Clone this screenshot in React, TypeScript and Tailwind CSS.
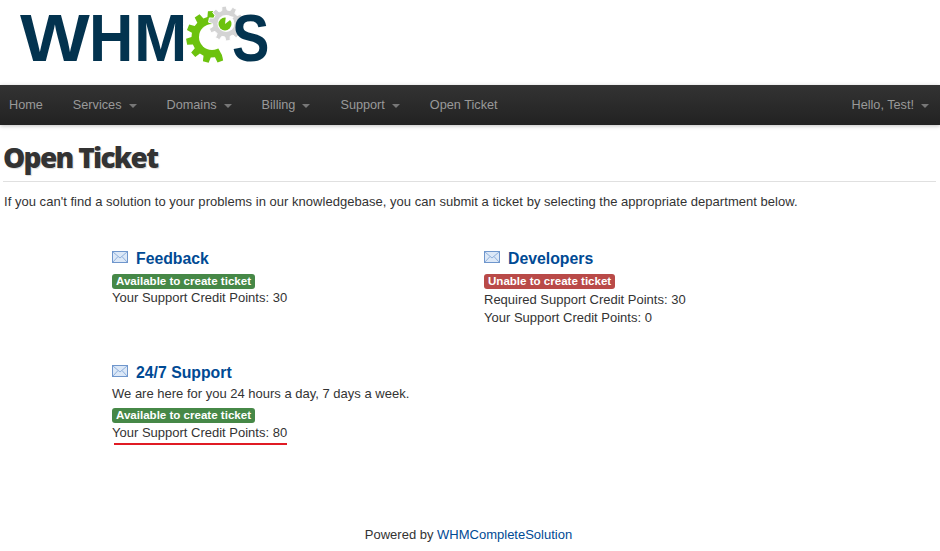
import React from 'react';

const gearPath = (cx: number, cy: number, outer: number, root: number, teeth: number, rot = 0) => {
  const pts: string[] = [];
  const step = (Math.PI * 2) / teeth;
  for (let i = 0; i < teeth; i++) {
    const a = rot + i * step;
    const corners: [number, number][] = [
      [root, a - step * 0.32],
      [outer, a - step * 0.2],
      [outer, a + step * 0.2],
      [root, a + step * 0.32],
    ];
    corners.forEach(([r, t]) => {
      pts.push(`${(cx + r * Math.cos(t)).toFixed(2)} ${(cy + r * Math.sin(t)).toFixed(2)}`);
    });
  }
  return `M${pts.join('L')}Z`;
};

const Logo = () => (
  <div className="flex items-start h-[85px] pl-[20px] text-[#03334f] text-[66px] leading-[76px] font-bold font-['Liberation_Sans',sans-serif]">
    <span className="inline-block origin-left scale-x-[1.12] mr-[7px]">W</span>
    <span className="inline-block origin-left scale-x-[0.93] -mr-[3px]">H</span>
    <span className="inline-block origin-left scale-x-[0.97]">M</span>
    <svg width="56" height="60" viewBox="0 0 56 60" className="shrink-0 mt-[6px] -ml-[3px]">
      <path d={gearPath(26, 31, 26, 20.5, 11, 0.1)} fill="#6cc20e" />
      <circle cx="26" cy="31" r="13" fill="#fff" />
      <path d="M26 31 L56 22 L56 60 L42 60 Z" fill="#fff" />
      <path d={gearPath(40, 17.5, 17.5, 13.5, 10, 0.2)} fill="#d4d4d4" stroke="#fff" strokeWidth="1" />
      <circle cx="40" cy="17.5" r="8.5" fill="#fff" />
      <circle cx="39" cy="18" r="6.5" fill="#6cc20e" />
      <path d="M39 18 L48 11 L40 9 Z" fill="#fff" />
    </svg>
    <span className="inline-block origin-left scale-x-[0.85] -ml-[10px]">S</span>
  </div>
);

const NavItem = ({ label, caret, className = '' }: { label: string; caret?: boolean; className?: string }) => (
  <a className={`flex items-center h-full text-[12.7px] text-[#999999] ${className}`}>
    {label}
    {caret && <span className="ml-[7px] mt-[1px] w-0 h-0 border-x-[4px] border-x-transparent border-t-[4px] border-t-[#777777]" />}
  </a>
);

const Badge = ({ ok }: { ok: boolean }) => (
  <div className="h-[16px] flex items-center">
    <span className={`inline-flex items-center h-[15px] pb-[1px] px-[4px] rounded-[3px] text-white text-[11.55px] font-bold ${ok ? 'bg-[#468847]' : 'bg-[#b94a48]'}`}>
      {ok ? 'Available to create ticket' : 'Unable to create ticket'}
    </span>
  </div>
);

const MailIcon = () => (
  <svg width="16" height="12" viewBox="0 0 16 12" className="shrink-0">
    <rect x="0.5" y="0.5" width="15" height="11" fill="#dce8f7" stroke="#6f96cc" />
    <path d="M1 1 L8 7 L15 1 M1 11 L6 5.5 M15 11 L10 5.5" fill="none" stroke="#8fb0dc" />
  </svg>
);

const Dept = ({ title, children }: { title: string; children: React.ReactNode }) => (
  <div>
    <div className="flex items-center h-[20px] gap-[8px]">
      <div className="-mt-[4px]"><MailIcon /></div>
      <a className="text-[15.8px] font-bold text-[#004a94] leading-[20px]">{title}</a>
    </div>
    {children}
  </div>
);

export default function App() {
  return (
    <div className="w-[940px] h-[551px] overflow-hidden bg-white text-[#333333] text-[13px] leading-[20px] font-['Liberation_Sans',Arial,sans-serif]">
      <Logo />
      <nav className="flex items-center justify-between h-[40px] pl-[9px] pr-[11px] bg-gradient-to-b from-[#333333] to-[#222222] shadow-[0_1px_4px_rgba(0,0,0,0.25)]">
        <div className="flex items-center h-full gap-[30px]">
          <NavItem label="Home" />
          <NavItem label="Services" caret />
          <NavItem label="Domains" caret />
          <NavItem label="Billing" caret />
          <NavItem label="Support" caret />
          <NavItem label="Open Ticket" />
        </div>
        <NavItem label="Hello, Test!" caret />
      </nav>

      <main className="px-[4px]">
        <h1 className="h-[57px] pt-[15px] border-b border-[#e0e0e0] text-[28px] leading-[34px] font-extrabold tracking-[-1.7px] -ml-[1px] font-['Open_Sans',sans-serif] [text-shadow:1px_1px_1px_rgba(0,0,0,0.15)]">
          Open Ticket
        </h1>
        <p className="mt-[10px] tracking-[0.03px]">
          If you can't find a solution to your problems in our knowledgebase, you can submit a ticket by selecting the appropriate department below.
        </p>

        <div className="grid grid-cols-[372px_1fr] ml-[108px] mt-[37px]">
          <div className="h-[114px]">
            <Dept title="Feedback">
              <div className="mt-[4px]"><Badge ok /></div>
              <p className="leading-[18px]">Your Support Credit Points: 30</p>
            </Dept>
          </div>
          <div>
            <Dept title="Developers">
              <div className="mt-[4px]"><Badge ok={false} /></div>
              <p className="mt-[2px] leading-[18px]">Required Support Credit Points: 30</p>
              <p className="leading-[18px]">Your Support Credit Points: 0</p>
            </Dept>
          </div>
          <div>
            <Dept title="24/7 Support">
              <p className="mt-[1px]">We are here for you 24 hours a day, 7 days a week.</p>
              <div className="mt-[3px]"><Badge ok /></div>
              <div className="relative w-fit leading-[18px] mt-[1px]">
                Your Support Credit Points: 80
                <span className="absolute left-[2px] right-0 top-[19px] h-[2px] bg-[#e01b24]" />
              </div>
            </Dept>
          </div>
        </div>
      </main>

      <footer className="mt-[83px] text-center pr-[3px]">
        Powered by <a className="text-[#004a94]">WHMCompleteSolution</a>
      </footer>
    </div>
  );
}
